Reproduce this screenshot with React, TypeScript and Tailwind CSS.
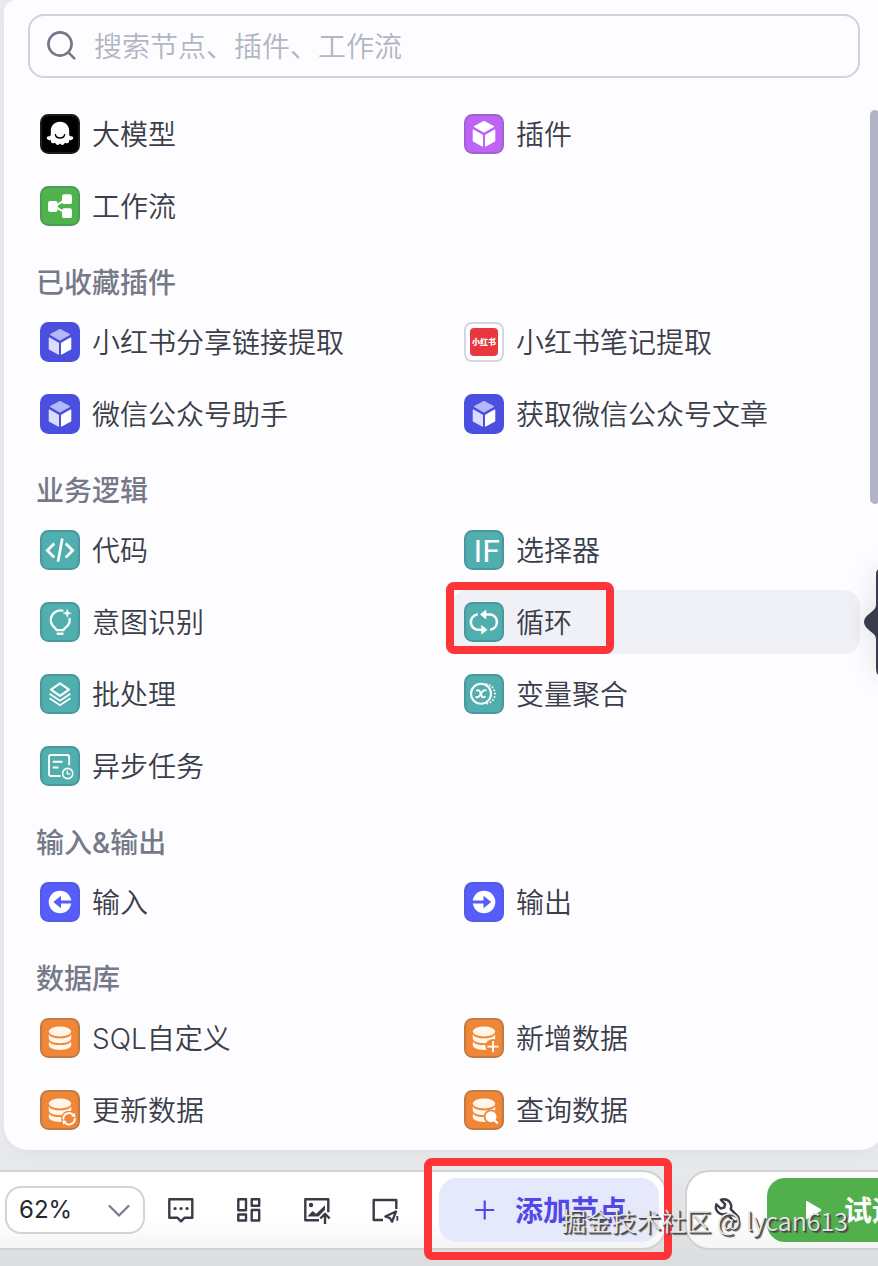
import type { ReactNode } from 'react';

const TONES = {
  black: ['#000000', '#1c1c1c'],
  purple: ['#bd63f6', '#a062d2'],
  green: ['#50b34b', '#4a9c58'],
  indigo: ['#4a4fdf', '#4a4fdf'],
  teal: ['#50aeae', '#4a989f'],
  blue: ['#575dfa', '#5459e2'],
  orange: ['#f08738', '#c27a45'],
} as const;

function Tile({ tone, children }: { tone: keyof typeof TONES; children: ReactNode }) {
  const [fill, edge] = TONES[tone];
  return (
    <svg viewBox="0 0 40 40" className="size-10 shrink-0" fill="none" aria-hidden="true">
      <rect x="1" y="1" width="38" height="38" rx="7.4" fill={fill} stroke={edge} strokeWidth="2" />
      {children}
    </svg>
  );
}

function ModelIcon() {
  return (
    <Tile tone="black">
      <path
        d="M20 7.8c-5.6 0-9.2 4-9.2 9.2v3.2c0 1.4-.7 2-2 2.1-1.5.1-2.300 1-1.900 2.100.5 1.300 2.100 1.900 4 1.700-.2 1.700.5 3.100 1.800 3.200 1 .1 1.700-.3 2.300-.9.6 1.600 1.500 2.500 2.700 2.500 1 0 1.700-.5 2.300-1.300.6.8 1.300 1.300 2.300 1.300 1.200 0 2.100-.9 2.700-2.500.6.6 1.300 1 2.300.9 1.300-.1 2-1.500 1.800-3.200 1.900.2 3.500-.4 4-1.700.4-1.100-.4-2-1.900-2.100-1.300-.1-2-.7-2-2.100V17c0-5.200-3.600-9.200-9.200-9.200Z"
        fill="#fff"
      />
      <path d="M15.400 20.700c.4 2.200 2.200 3.300 4.600 3.300s4.200-1.100 4.600-3.300" stroke="#000" strokeWidth="1.400" strokeLinecap="round" />
    </Tile>
  );
}

function CubeIcon({ tone, top, left }: { tone: 'purple' | 'indigo'; top: string; left: string }) {
  return (
    <Tile tone={tone}>
      <path d="M20 7.500 29.500 12.500 20 18 10.500 12.500Z" fill={top} stroke={top} strokeWidth="1.200" strokeLinejoin="round" />
      <path d="M9.300 16 18.400 21.300v10.600L9.300 26.900Z" fill={left} stroke={left} strokeWidth="1.200" strokeLinejoin="round" />
      <path d="M30.700 16 21.600 21.300v10.600l9.100-5Z" fill="#fff" stroke="#fff" strokeWidth="1.200" strokeLinejoin="round" />
    </Tile>
  );
}

const pluginIcon = <CubeIcon tone="indigo" top="#b5b8f6" left="#dcdeff" />;

function WorkflowIcon() {
  return (
    <Tile tone="green">
      <path d="M26 13 15 20.500 26 27.500" stroke="#fff" strokeWidth="1.900" />
      <rect x="8" y="15" width="9.600" height="11" rx="2.200" fill="#fff" />
      <rect x="22" y="8.300" width="10" height="9.800" rx="2.200" fill="#fff" />
      <rect x="22" y="22.300" width="10" height="9.800" rx="2.200" fill="#fff" />
    </Tile>
  );
}

function RedBookIcon() {
  return (
    <span aria-hidden="true" className="flex size-10 shrink-0 items-center justify-center rounded-lg border-2 border-[#d6d6df] bg-white">
      <span className="flex size-7 items-center justify-center rounded-[4px] bg-[#e8383f] text-[8px] leading-none font-black text-white">
        小红书
      </span>
    </span>
  );
}

function CodeIcon() {
  return (
    <Tile tone="teal">
      <path d="M14.300 13.500 7.300 20.500l7 7M25.700 13.500l7 7-7 7M22.300 8.500 18 31.700" stroke="#fff" strokeWidth="2.700" />
    </Tile>
  );
}

function BranchIcon() {
  return (
    <Tile tone="teal">
      <text x="9.500" y="31.500" fontSize="32" fill="#fff" fontFamily="Roboto, sans-serif" fontWeight="400">
        IF
      </text>
    </Tile>
  );
}

function IntentIcon() {
  return (
    <Tile tone="teal">
      <path
        d="M23.300 8.900a9.600 9.600 0 0 0-9.200 16.400c1.500 1.100 2.300 1.700 2.300 2.900h7.200c0-1.200.8-1.800 2.300-2.900a9.600 9.600 0 0 0 3.600-9.300"
        stroke="#fff"
        strokeWidth="2.300"
        strokeLinejoin="round"
      />
      <path d="M16.700 31.700h6.800" stroke="#fff" strokeWidth="2.300" />
      <path d="M27.200 7c.7 2.900 1.300 3.500 4.200 4.200-2.900.7-3.500 1.300-4.200 4.200-.7-2.900-1.300-3.500-4.200-4.200 2.900-.7 3.500-1.300 4.200-4.200Z" fill="#fff" stroke="#fff" strokeWidth=".4" />
    </Tile>
  );
}

function LoopIcon() {
  return (
    <Tile tone="teal">
      <path d="M13.800 12.500h-.5a7.700 7.700 0 0 0 0 15.200H18M26.200 27.700a7.700 7.700 0 0 0 .5-15.200H21" stroke="#fff" strokeWidth="2.600" />
      <path d="M16.300 12.500 22 8v9ZM23.200 27.700l-5.700 4.500v-9Z" fill="#fff" stroke="#fff" strokeWidth=".5" strokeLinejoin="round" />
    </Tile>
  );
}

function BatchIcon() {
  return (
    <Tile tone="teal">
      <path d="m20 9.300 9 6.300-9 6.300-9-6.300Z" stroke="#fff" strokeWidth="2.200" strokeLinejoin="round" />
      <path d="m9.600 19.700 10.400 7 10.400-7M9.600 24.200l10.400 7 10.400-7" stroke="#fff" strokeWidth="1.900" />
    </Tile>
  );
}

function AggregateIcon() {
  return (
    <Tile tone="teal">
      <circle cx="17" cy="19.800" r="10" stroke="#fff" strokeWidth="2.100" />
      <path d="M22.500 10.200a9.900 9.900 0 0 1 0 19.600" stroke="#fff" strokeWidth="1.900" strokeLinecap="round" strokeDasharray=".1 3.300" />
      <path
        d="M12.800 16.600c1.300-.9 2.500-.5 3 .8l1.900 4.800c.5 1.300 1.900 1.600 3.200.6M21.600 16.300c-1.500-.6-2.800.3-4.600 3.400-1.800 3.100-3.100 4.100-4.700 3.400"
        stroke="#fff"
        strokeWidth="1.900"
        strokeLinecap="round"
      />
    </Tile>
  );
}

function AsyncIcon() {
  return (
    <Tile tone="teal">
      <path d="M29.200 19.300V11a2 2 0 0 0-2-2H11a2 2 0 0 0-2 2v17a2 2 0 0 0 2 2h9.600" stroke="#fff" strokeWidth="1.900" />
      <path d="M12.800 15.700h9.700M12.800 21.500h5.700" stroke="#fff" strokeWidth="1.900" />
      <circle cx="27.700" cy="27.500" r="5.100" stroke="#fff" strokeWidth="1.600" />
      <path d="M27.200 24.500v3.400h3" stroke="#fff" strokeWidth="1.300" />
    </Tile>
  );
}

function InputIcon() {
  return (
    <Tile tone="blue">
      <circle cx="20" cy="20" r="11.300" fill="#fff" />
      <path d="M13.300 20 21 13.800v4.700h11v3H21v4.700Z" fill="#575dfa" />
    </Tile>
  );
}

function OutputIcon() {
  return (
    <Tile tone="blue">
      <circle cx="20" cy="20" r="11.300" fill="#fff" />
      <path d="M27.200 20 19.500 13.800v4.700H8v3h11.500v4.700Z" fill="#575dfa" />
    </Tile>
  );
}

function DatabaseIcon({ children }: { children?: ReactNode }) {
  return (
    <Tile tone="orange">
      <ellipse cx="20" cy="13.500" rx="11.200" ry="5.100" fill="#fff6ea" />
      <path d="M8.800 16.600c1.800 2.600 6.200 3.900 11.200 3.900s9.400-1.300 11.200-3.900v3.900c0 2.600-5 4.700-11.200 4.700S8.800 23.100 8.800 20.500Z" fill="#fff6ea" />
      <path d="M8.800 23.400c1.800 2.500 6.200 3.700 11.200 3.700s9.400-1.200 11.200-3.700v3.800c0 2.600-5 4.700-11.200 4.700S8.800 29.800 8.800 27.200Z" fill="#fff6ea" />
      {children}
    </Tile>
  );
}

const addMark = (
  <>
    <circle cx="29" cy="28.500" r="7.600" fill="#f08738" />
    <path d="M29 23v11.200M23.400 28.600h11.200" stroke="#fff" strokeWidth="1.900" />
  </>
);

const refreshMark = (
  <>
    <circle cx="29" cy="28.700" r="8" fill="#f08738" />
    <path d="M23.400 29.500a5.700 5.700 0 0 1 9.800-4.600M34.700 28a5.700 5.700 0 0 1-9.900 4.600" stroke="#fff" strokeWidth="1.900" />
    <path d="m31.200 26.600 4.300.6-.8-4.500ZM26.800 30.900l-4.300-.7.8 4.600Z" fill="#fff" />
  </>
);

const searchMark = (
  <>
    <circle cx="27" cy="26.700" r="7.300" fill="#f08738" />
    <circle cx="27" cy="26.700" r="5.500" fill="#fff" />
    <path d="m30 29.700 3.800 3.800" stroke="#fff" strokeWidth="2.200" />
  </>
);

type Node = { label: string; icon: ReactNode; active?: boolean };

const SECTIONS: { title?: string; nodes: Node[] }[] = [
  {
    nodes: [
      { label: '大模型', icon: <ModelIcon /> },
      { label: '插件', icon: <CubeIcon tone="purple" top="#fff" left="#fff" /> },
      { label: '工作流', icon: <WorkflowIcon /> },
    ],
  },
  {
    title: '已收藏插件',
    nodes: [
      { label: '小红书分享链接提取', icon: pluginIcon },
      { label: '小红书笔记提取', icon: <RedBookIcon /> },
      { label: '微信公众号助手', icon: pluginIcon },
      { label: '获取微信公众号文章', icon: pluginIcon },
    ],
  },
  {
    title: '业务逻辑',
    nodes: [
      { label: '代码', icon: <CodeIcon /> },
      { label: '选择器', icon: <BranchIcon /> },
      { label: '意图识别', icon: <IntentIcon /> },
      { label: '循环', icon: <LoopIcon />, active: true },
      { label: '批处理', icon: <BatchIcon /> },
      { label: '变量聚合', icon: <AggregateIcon /> },
      { label: '异步任务', icon: <AsyncIcon /> },
    ],
  },
  {
    title: '输入&输出',
    nodes: [
      { label: '输入', icon: <InputIcon /> },
      { label: '输出', icon: <OutputIcon /> },
    ],
  },
  {
    title: '数据库',
    nodes: [
      { label: 'SQL自定义', icon: <DatabaseIcon /> },
      { label: '新增数据', icon: <DatabaseIcon>{addMark}</DatabaseIcon> },
      { label: '更新数据', icon: <DatabaseIcon>{refreshMark}</DatabaseIcon> },
      { label: '查询数据', icon: <DatabaseIcon>{searchMark}</DatabaseIcon> },
    ],
  },
];

function NodeButton({ label, icon, active }: Node) {
  return (
    <div className="relative">
      <button
        type="button"
        className={`flex h-16 w-full items-center gap-3 rounded-2xl px-3 text-left text-[28px] leading-10 font-[350] text-[#3b3d49] ${active ? 'bg-[#f0f1f7]' : ''}`}
      >
        {icon}
        <span className="pt-0.5">{label}</span>
      </button>
      {active && <span className="pointer-events-none absolute -top-2 bottom-0 -left-1.5 w-[168px] rounded-lg border-8 border-[#fd3539]" />}
      {active && (
        <svg
          viewBox="0 0 24 110"
          aria-hidden="true"
          className="absolute -top-[23px] -right-7 h-[110px] w-6 drop-shadow-[0_0_12px_rgba(0,0,0,0.14)]"
        >
          <path d="M24 0h-4q-8 0-8 8v30c0 7-12 9-12 17s12 10 12 17v30q0 8 8 8h4Z" fill="#373b4b" />
        </svg>
      )}
    </div>
  );
}

function ToolButton({ label, children }: { label: string; children: ReactNode }) {
  return (
    <button type="button" aria-label={label} className="size-7 shrink-0 text-[#3a3b47]">
      <svg viewBox="0 0 28 28" className="size-7" fill="none" stroke="currentColor" strokeWidth="2.400" strokeLinejoin="round">
        {children}
      </svg>
    </button>
  );
}

export default function App() {
  return (
    <main className="relative flex min-h-screen flex-col overflow-hidden bg-linear-to-b from-[#ebecee] from-90% to-[#dcddde] pb-4 font-[Inter,'Noto_Sans_CJK_SC',sans-serif]">
      <section className="relative -mr-1.5 ml-1 rounded-b-3xl rounded-tl-xl bg-[#fdfdff] px-6 pt-3.5 pb-2 shadow-[0_4px_16px_rgba(60,65,80,0.06)]">
        <label className="flex h-16 items-center gap-4 rounded-2xl border-2 border-[#d2d2d7] px-4">
          <svg viewBox="0 0 32 32" className="size-8 shrink-0" fill="none" stroke="#74768a" strokeWidth="2.600" aria-hidden="true">
            <circle cx="14" cy="14" r="11.600" />
            <path d="m22.300 22.300 6 6" strokeLinecap="round" />
          </svg>
          <input
            type="text"
            aria-label="搜索节点、插件、工作流"
            placeholder="搜索节点、插件、工作流"
            className="min-w-0 flex-1 bg-transparent pt-0.5 text-[28px] leading-10 font-[350] text-[#3b3d49] outline-none placeholder:text-[#b3b5c3]"
          />
        </label>
        <div className="mt-6">
          {SECTIONS.map(({ title, nodes }) => (
            <div key={nodes[0].label}>
              {title && <h2 className="px-2 pt-[25px] pb-[7px] text-[28px] leading-10 font-medium text-[#767987]">{title}</h2>}
              <div className="grid grid-cols-2 gap-x-4 gap-y-2">
                {nodes.map((node) => (
                  <NodeButton key={node.label} {...node} />
                ))}
              </div>
            </div>
          ))}
        </div>
        <div className="absolute top-[110px] right-1 h-[394px] w-2.5 rounded-full bg-[#b2b3c6]" />
      </section>

      <div className="mt-5 flex gap-[18px]">
        <div className="flex h-20 shrink-0 items-center rounded-r-3xl border-2 border-l-0 border-[#cfd1d4] bg-linear-to-b from-white from-60% to-[#f5f5f6] pr-1.5 pl-[5px]">
          <div className="relative">
            <select
              aria-label="缩放比例"
              className="h-12 w-[140px] appearance-none rounded-2xl border-2 border-[#d2d2d7] bg-white pl-3 font-[Inter,sans-serif] text-[24px] text-[#26272e]"
              defaultValue="62"
            >
              <option value="62">62%</option>
            </select>
            <svg viewBox="0 0 24 24" className="pointer-events-none absolute top-3 right-[14px] size-6" fill="none" stroke="#777a88" strokeWidth="2.200" aria-hidden="true">
              <path d="m2.500 8 9.500 9.500 9.500-9.500" strokeLinecap="round" />
            </svg>
          </div>
          <div className="mr-10 ml-[22px] flex gap-10">
            <ToolButton label="添加注释">
              <path d="M2.300 3.300h23v18.400h-7.600L14 25.300l-3.700-3.600h-8Z" />
              <path d="M8 12.500h.1M14 12.500h.1M20 12.500h.1" strokeWidth="3.200" strokeLinecap="round" />
            </ToolButton>
            <ToolButton label="优化布局">
              <path d="M3.300 3.300h7.700v11H3.300ZM16.700 3.300h7.500v6.400h-7.500ZM3.300 18.500h7.700v6H3.300ZM16.700 14h7.500v10.500h-7.500Z" />
            </ToolButton>
            <ToolButton label="导出图片">
              <path d="M16 24.300H2.300v-21h23v13" />
              <circle cx="8" cy="9" r="2.200" fill="currentColor" stroke="none" />
              <path d="M4.500 20.500 9.500 15l3.700 2.700 8.800-8.500v4.500l-6.500 6.800Z" fill="currentColor" stroke="none" />
              <path d="M22 28V18.300M17.300 22.500l4.700-4.700 4.700 4.700" />
            </ToolButton>
            <ToolButton label="小地图">
              <path d="M12 24H2.700V4h22.600v9" />
              <path d="M14.300 20.500 25 15.500l-4 10.300-2-3.600Z" strokeWidth="2.300" />
              <path d="M26.300 20v4.800" strokeWidth="1.800" />
            </ToolButton>
          </div>
          <div className="relative">
            <button type="button" className="flex h-16 items-center gap-4 rounded-[18px] bg-[#e6e8fb] px-8 text-[28px] font-bold text-[#5248e8]">
              <svg viewBox="0 0 28 28" className="size-7" stroke="currentColor" strokeWidth="2.200" aria-hidden="true">
                <path d="M13.700 4.500v19M4.200 14h19" />
              </svg>
              <span className="pt-0.5">添加节点</span>
            </button>
            <span className="pointer-events-none absolute -top-5 -right-[13px] -bottom-[18px] -left-[15px] z-10 rounded-lg border-8 border-[#fd3539]" />
          </div>
        </div>
        <div className="flex h-20 shrink-0 items-center rounded-3xl border-2 border-[#cfd1d4] bg-linear-to-b from-white from-60% to-[#f5f5f6] pr-1.5 pl-[26px]">
          <ToolButton label="调试工具">
            <path
              d="M10.800 3.200a7.300 7.300 0 0 1 6.900 10l7.100 7.100a3.100 3.100 0 0 1-4.400 4.400l-7.100-7.100A7.300 7.300 0 0 1 3.400 8.300l4.300 4.200 3.500-.9.900-3.500-4.200-4.200c.9-.5 1.900-.7 2.900-.7Z"
            />
          </ToolButton>
          <button type="button" className="ml-[26px] flex h-16 items-center gap-[22px] rounded-[18px] bg-[#51b04c] pr-10 pl-[39px] text-[28px] font-bold text-white">
            <svg viewBox="0 0 16 20" className="h-5 w-4" fill="currentColor" aria-hidden="true">
              <path d="M1.500 1.200 15 9.200q1 .8 0 1.600l-13.500 8Q0 19.300 0 18V2Q0 .7 1.500 1.200Z" />
            </svg>
            <span className="pt-0.5">试运行</span>
          </button>
        </div>
      </div>

      <p className="pointer-events-none absolute right-[30px] bottom-[26px] z-20 text-[25px] leading-10 font-[350] whitespace-nowrap text-[#e6e6e6] font-['Noto_Sans_CJK_SC',sans-serif] [text-shadow:1px_1px_0_#444,2px_2px_1px_#555]">
        掘金技术社区 @ lycan613
      </p>
    </main>
  );
}
